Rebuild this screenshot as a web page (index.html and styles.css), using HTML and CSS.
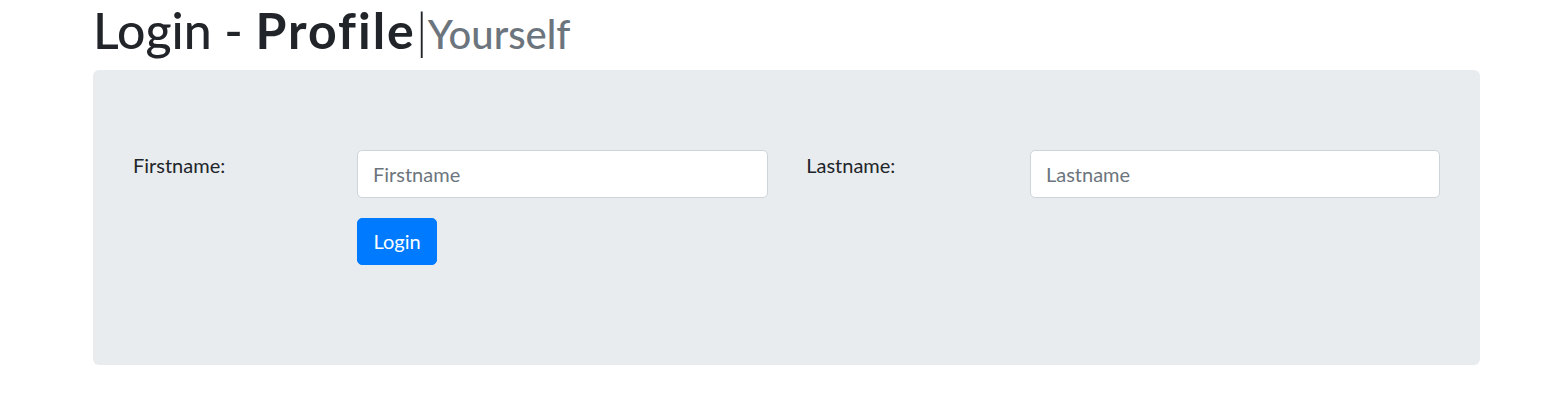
FILE: index.html
```html
<!DOCTYPE html>
<html lang="en">
<head>
<meta charset="utf-8">
<title>Login - Profile Yourself</title>
<link rel="stylesheet" href="styles.css">
</head>
<body>
<div class="container">
  <h1 class="title">Login - <b>Profile</b><span class="pipe">|</span><span class="muted">Yourself</span></h1>
  <div class="jumbotron">
    <form class="form">
      <label class="label" for="fn">Firstname:</label>
      <div class="field">
        <input class="input" id="fn" type="text" placeholder="Firstname">
      </div>
      <label class="label label-second" for="ln">Lastname:</label>
      <div class="field">
        <input class="input" id="ln" type="text" placeholder="Lastname">
      </div>
      <div class="actions">
        <button class="btn" type="button">Login</button>
      </div>
    </form>
  </div>
</div>
</body>
</html>
```

FILE: styles.css
```css
* { box-sizing: border-box; }
html, body { margin: 0; padding: 0; background: #fff; }
body {
  font-family: "Segoe UI", Lato, "Noto Sans", sans-serif;
  font-size: 20px;
  line-height: 1.5;
  color: #212529;
}
.container {
  margin-left: 93px;
  width: 1387px;
}
.title {
  margin: 0 0 10px;
  font-size: 50px;
  font-weight: 500;
  line-height: 1.2;
  height: 60px;
  white-space: nowrap;
}
.title b { font-weight: 700; letter-spacing: 2px; }
.pipe { font-weight: 300; }
.muted {
  color: #6c757d;
  font-size: 40px;
}
.jumbotron {
  background: #e9ecef;
  border-radius: 6px;
  padding: 80px 40px;
}
.form {
  display: grid;
  grid-template-columns: 224px 410.7px 262.3px 410px;
}
.label {
  display: block;
  line-height: 30px;
  margin-bottom: 20px;
}
.label-second { padding-left: 38.5px; }
.field { margin-bottom: 20px; }
.input {
  display: block;
  width: 100%;
  height: 47.5px;
  padding: 7.5px 15px;
  font: inherit;
  font-size: 20px;
  line-height: 1.5;
  color: #495057;
  background: #fff;
  border: 1.25px solid #ced4da;
  border-radius: 5px;
}
.input::placeholder { color: #6c757d; opacity: 1; }
.actions {
  grid-column: 2;
  margin-bottom: 20px;
}
.btn {
  display: inline-block;
  height: 47.5px;
  padding: 7.5px 15.5px;
  font: inherit;
  font-size: 20px;
  line-height: 1.5;
  color: #fff;
  background: #007bff;
  border: 1.25px solid #007bff;
  border-radius: 5px;
}
```
